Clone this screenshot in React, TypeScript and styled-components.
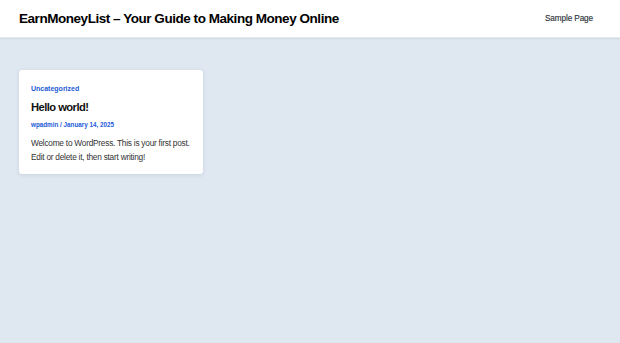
import React from "react";
import styled, { createGlobalStyle } from "styled-components";

const Global = createGlobalStyle`
  html, body { margin: 0; padding: 0; }
  body {
    background: #dfe7f1;
    font-family: "Liberation Sans", Arial, sans-serif;
    min-height: 343px;
  }
`;

const Header = styled.header`
  height: 38px;
  background: #fff;
  display: flex;
  align-items: center;
  justify-content: space-between;
  padding: 0 27px 0 19px;
  box-shadow: 0 1px 2px rgba(0, 0, 0, 0.06);
  border-bottom: 1px solid #e4e9ef;
  box-sizing: border-box;
`;

const SiteTitle = styled.h1`
  margin: 0;
  font-size: 13.5px;
  font-weight: 700;
  color: #000;
  letter-spacing: -0.46px;
`;

const NavLink = styled.a`
  font-size: 8.2px;
  color: #2c3338;
  text-decoration: none;
  letter-spacing: -0.1px;
  -webkit-text-stroke: 0.15px #2c3338;
`;

const Main = styled.main`
  padding: 32px 19px;
  display: grid;
  grid-template-columns: 184px;
`;

const Card = styled.article`
  background: #fff;
  border-radius: 3px;
  box-shadow: 0 1px 4px rgba(30, 60, 100, 0.12);
  padding: 14.5px 12px 10.5px 12px;
  display: flex;
  flex-direction: column;
`;

const Category = styled.a`
  font-size: 7px;
  font-weight: 700;
  color: #1c5ad8;
  text-decoration: none;
`;

const PostTitle = styled.h2`
  margin: 9.5px 0 0;
  font-size: 11.2px;
  line-height: 13px;
  font-weight: 700;
  color: #111;
  letter-spacing: -0.55px;
`;

const Meta = styled.div`
  margin-top: 6.5px;
  font-size: 6.3px;
  font-weight: 700;
  color: #1c5ad8;
`;

const Excerpt = styled.p`
  margin: 8px 0 0;
  font-size: 8.3px;
  line-height: 14px;
  color: #333;
  letter-spacing: -0.24px;
`;

export default function App() {
  return (
    <>
      <Global />
      <Header>
        <SiteTitle>EarnMoneyList – Your Guide to Making Money Online</SiteTitle>
        <NavLink href="#">Sample Page</NavLink>
      </Header>
      <Main>
        <Card>
          <Category href="#">Uncategorized</Category>
          <PostTitle>Hello world!</PostTitle>
          <Meta>wpadmin / January 14, 2025</Meta>
          <Excerpt>
            Welcome to WordPress. This is your first post. Edit or delete it, then start writing!
          </Excerpt>
        </Card>
      </Main>
    </>
  );
}
